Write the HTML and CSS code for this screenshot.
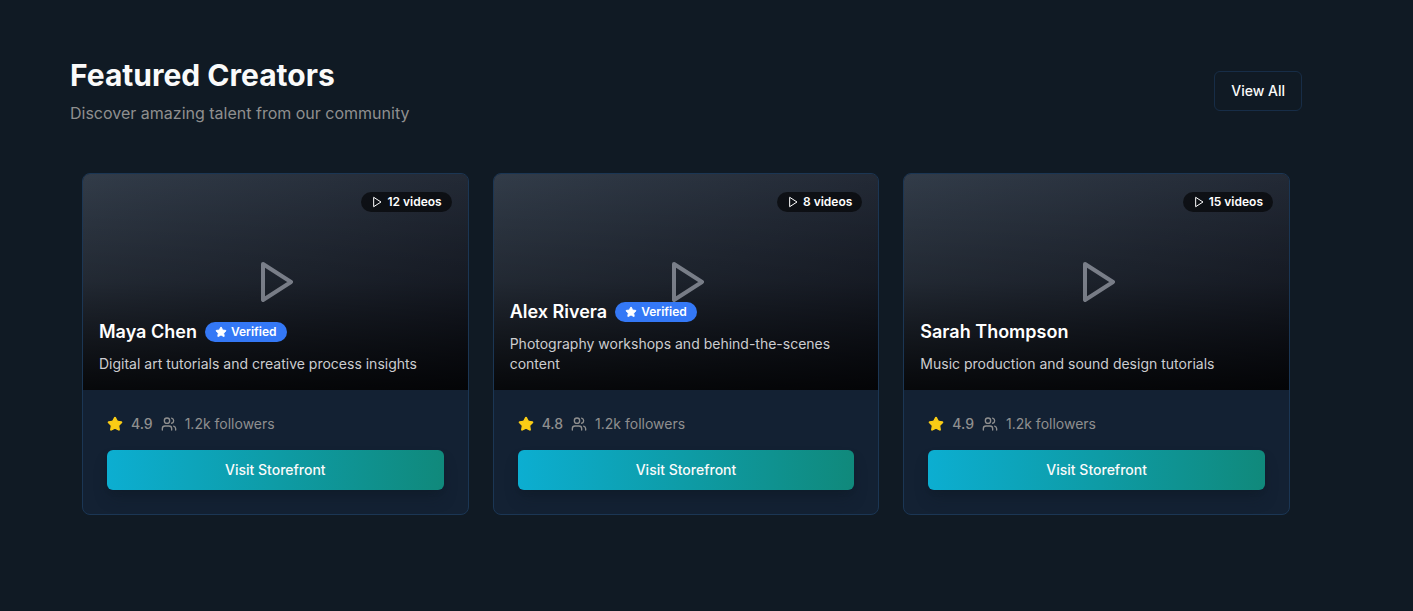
FILE: index.html
```html
<!DOCTYPE html>
<html lang="en">
<head>
<meta charset="utf-8">
<meta name="viewport" content="width=device-width, initial-scale=1">
<title>Featured Creators</title>
<link rel="stylesheet" href="styles.css">
</head>
<body>
<svg class="sprite" aria-hidden="true">
  <symbol id="play" viewBox="0 0 24 24"><path d="M6 3l14 9-14 9z"/></symbol>
  <symbol id="star" viewBox="0 0 24 24"><path d="M11.525 2.295a.53.53 0 0 1 .95 0l2.31 4.679a2.123 2.123 0 0 0 1.595 1.16l5.166.756a.53.53 0 0 1 .294.904l-3.736 3.638a2.123 2.123 0 0 0-.611 1.878l.882 5.14a.53.53 0 0 1-.771.56l-4.618-2.428a2.122 2.122 0 0 0-1.973 0L6.396 21.01a.53.53 0 0 1-.77-.56l.881-5.139a2.122 2.122 0 0 0-.611-1.879L2.16 9.795a.53.53 0 0 1 .294-.906l5.165-.755a2.122 2.122 0 0 0 1.597-1.16z"/></symbol>
  <symbol id="users" viewBox="0 0 24 24"><path d="M16 21v-2a4 4 0 0 0-4-4H6a4 4 0 0 0-4 4v2"/><circle cx="9" cy="7" r="4"/><path d="M22 21v-2a4 4 0 0 0-3-3.870"/><path d="M16 3.130a4 4 0 0 1 0 7.750"/></symbol>
</svg>
<main class="featured">
  <header class="featured-header">
    <div>
      <h2 class="title">Featured Creators</h2>
      <p class="subtitle">Discover amazing talent from our community</p>
    </div>
    <button class="button view-all" type="button">View All</button>
  </header>
  <div class="creators">
    <article class="card">
      <div class="cover">
        <svg class="icon cover-play"><use href="#play"/></svg>
        <span class="badge count"><svg class="icon icon-small"><use href="#play"/></svg>12 videos</span>
        <div class="intro">
          <div class="name-row"><h3 class="name">Maya Chen</h3><span class="badge verified"><svg class="icon icon-small filled"><use href="#star"/></svg>Verified</span></div>
          <p class="about">Digital art tutorials and creative process insights</p>
        </div>
      </div>
      <div class="details">
        <div class="stats"><svg class="icon filled rating-star"><use href="#star"/></svg><span class="rating">4.9</span><svg class="icon"><use href="#users"/></svg><span>1.2k followers</span></div>
        <button class="button visit" type="button">Visit Storefront</button>
      </div>
    </article>
    <article class="card">
      <div class="cover">
        <svg class="icon cover-play"><use href="#play"/></svg>
        <span class="badge count"><svg class="icon icon-small"><use href="#play"/></svg>8 videos</span>
        <div class="intro">
          <div class="name-row"><h3 class="name">Alex Rivera</h3><span class="badge verified"><svg class="icon icon-small filled"><use href="#star"/></svg>Verified</span></div>
          <p class="about">Photography workshops and behind-the-scenes content</p>
        </div>
      </div>
      <div class="details">
        <div class="stats"><svg class="icon filled rating-star"><use href="#star"/></svg><span class="rating">4.8</span><svg class="icon"><use href="#users"/></svg><span>1.2k followers</span></div>
        <button class="button visit" type="button">Visit Storefront</button>
      </div>
    </article>
    <article class="card">
      <div class="cover">
        <svg class="icon cover-play"><use href="#play"/></svg>
        <span class="badge count"><svg class="icon icon-small"><use href="#play"/></svg>15 videos</span>
        <div class="intro">
          <div class="name-row"><h3 class="name">Sarah Thompson</h3></div>
          <p class="about">Music production and sound design tutorials</p>
        </div>
      </div>
      <div class="details">
        <div class="stats"><svg class="icon filled rating-star"><use href="#star"/></svg><span class="rating">4.9</span><svg class="icon"><use href="#users"/></svg><span>1.2k followers</span></div>
        <button class="button visit" type="button">Visit Storefront</button>
      </div>
    </article>
  </div>
</main>
</body>
</html>
```
FILE: styles.css
```css
* { box-sizing: border-box; }
body {
  margin: 0;
  background: #101a24;
  color: #fafafa;
  font-family: Inter, "Liberation Sans", sans-serif;
  font-size: 14px;
  line-height: 20px;
}
h2, h3, p { margin: 0; }
.sprite { position: absolute; width: 0; height: 0; }
.featured { padding: 57px 111px 96px 70px; }
.featured-header {
  display: flex;
  align-items: center;
  justify-content: space-between;
  margin-bottom: 48px;
}
.title { margin-bottom: 8px; font-size: 30px; line-height: 36px; font-weight: 700; }
.subtitle { font-size: 16px; line-height: 24px; color: #8f8f8f; }
.button {
  height: 40px;
  padding: 0 16px;
  border: 0;
  border-radius: 6px;
  color: #fafafa;
  font: 500 14px/20px Inter, "Liberation Sans", sans-serif;
  cursor: pointer;
}
.view-all { border: 1px solid #172d47; background: transparent; }
.creators {
  display: grid;
  grid-template-columns: repeat(3, minmax(0, 1fr));
  gap: 24px;
  padding: 0 12px;
}
.card {
  overflow: hidden;
  border: 1px solid #1b3654;
  border-radius: 8px;
  background: #132133;
}
.cover {
  position: relative;
  display: flex;
  align-items: flex-end;
  aspect-ratio: 16 / 9;
  background: linear-gradient(to bottom right, #323c49, #131722);
}
.cover::before {
  content: "";
  position: absolute;
  inset: 0;
  background: linear-gradient(to top, rgba(0, 0, 0, 0.8), rgba(0, 0, 0, 0.2) 50%, transparent);
}
.icon {
  flex: none;
  width: 16px;
  height: 16px;
  fill: none;
  stroke: currentColor;
  stroke-width: 2;
  stroke-linecap: round;
  stroke-linejoin: round;
}
.icon-small { width: 12px; height: 12px; }
.filled { fill: currentColor; }
.cover-play {
  position: absolute;
  inset: 0;
  width: 48px;
  height: 48px;
  margin: auto;
  color: #d5d9e4;
  opacity: 0.5;
}
.badge {
  display: inline-flex;
  align-items: center;
  gap: 4px;
  padding: 2px 10px;
  border-radius: 10px;
  font-size: 12px;
  line-height: 16px;
  font-weight: 600;
  color: #fff;
}
.count { position: absolute; top: 18px; right: 16px; background: rgba(0, 0, 0, 0.6); }
.verified { background: #3478f6; }
.intro { position: relative; flex: 1; padding: 16px; }
.name-row { display: flex; align-items: center; gap: 8px; margin-bottom: 8px; }
.name { font-size: 18px; line-height: 28px; font-weight: 600; color: #fff; }
.about { color: #cccdd0; }
.details { padding: 24px; }
.stats {
  display: flex;
  align-items: center;
  gap: 8px;
  margin-bottom: 16px;
  color: #8f8f8f;
}
.rating { font-weight: 500; }
.rating-star { color: #facc15; }
.visit {
  width: 100%;
  background: linear-gradient(to right, #0caed1, #10897b);
  box-shadow: 0 10px 15px -3px rgba(16, 25, 36, 0.4), 0 4px 6px -4px rgba(16, 25, 36, 0.4);
}
```
